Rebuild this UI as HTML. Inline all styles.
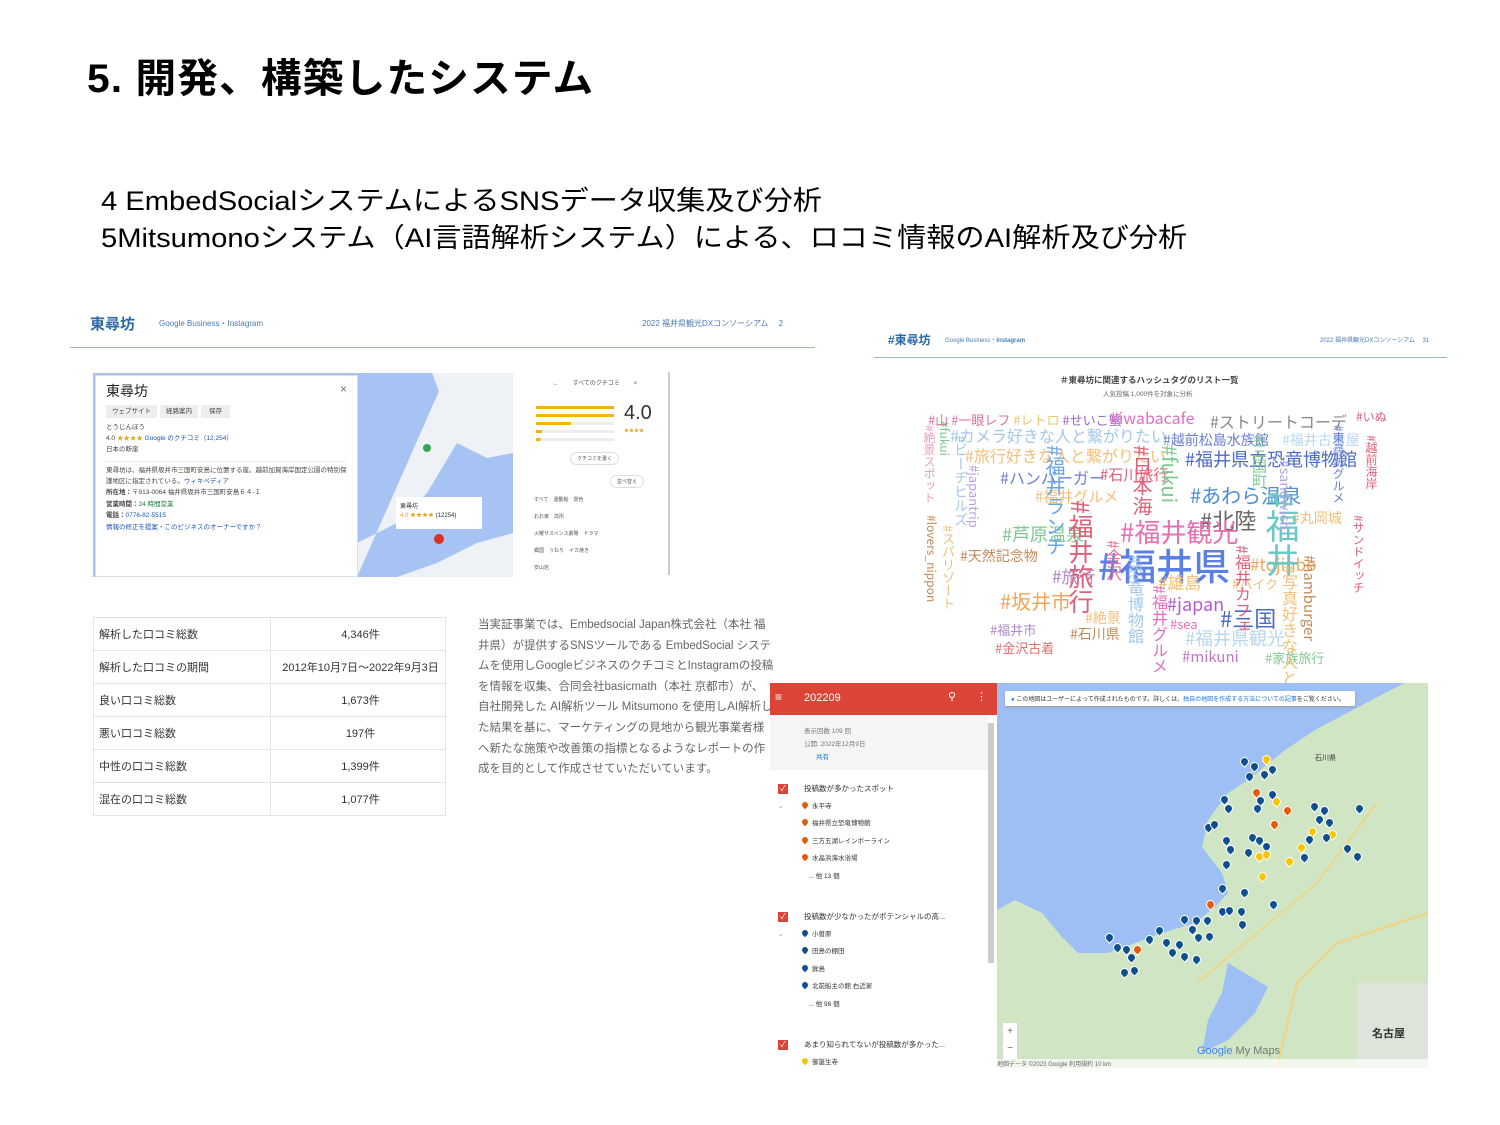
<!DOCTYPE html>
<html><head><meta charset="utf-8">
<style>
*{margin:0;padding:0;box-sizing:border-box}
body{width:1500px;height:1125px;background:#fff;position:relative;overflow:hidden;font-family:"Liberation Sans","Noto Sans CJK JP",sans-serif;color:#000}
.a{position:absolute;white-space:nowrap}
.n{white-space:normal}
.w{position:absolute;white-space:nowrap;font-family:"Noto Sans CJK JP",sans-serif;line-height:1}
.v{writing-mode:vertical-rl}
.pin{position:absolute;width:9px;height:9px;border-radius:50% 50% 50% 0;transform:rotate(-45deg);background:#0d4f8f;border:1px solid #fff}
.y{background:#f7c600}.o{background:#e8590c}
td{border:1px solid #e4e4e4;font-size:11px;color:#333;height:33px;padding-left:5px}
.cb{display:inline-block;width:10px;height:10px;background:#db4437;margin-right:16px;color:#fff;font-size:8px;line-height:10px;text-align:center;vertical-align:middle}
.p{display:inline-block;width:6px;height:6px;border-radius:50% 50% 50% 0;transform:rotate(-45deg);margin-right:4px}
</style></head><body>
<div class="a" style="left:87px;top:46px;font-size:40px;font-weight:bold;letter-spacing:1px;transform:scaleX(1.02);transform-origin:left">5. 開発、構築したシステム</div>
<div class="a" style="left:101px;top:179px;font-size:27px;transform:scaleX(1.08);transform-origin:left">4 EmbedSocialシステムによるSNSデータ収集及び分析</div>
<div class="a" style="left:101px;top:216px;font-size:27px;transform:scaleX(1.08);transform-origin:left">5Mitsumonoシステム（AI言語解析システム）による、ロコミ情報のAI解析及び分析</div>

<!-- left panel -->
<div class="a" style="left:90px;top:313px;font-size:15px;font-weight:bold;color:#2b6aa8">東尋坊</div>
<div class="a" style="left:159px;top:318px;font-size:8px;color:#4a7cb3">Google Business・Instagram</div>
<div class="a" style="left:642px;top:318px;font-size:8px;color:#4a7cb3">2022 福井県観光DXコンソーシアム　 2</div>
<div class="a" style="left:70px;top:347px;width:745px;height:1px;background:#9bb7d0"></div>

<div class="a" style="left:93px;top:373px;width:420px;height:204px;background:#a7c3f3"></div>
<svg class="a" style="left:357px;top:373px" width="156" height="204"><path d="M90 0L156 0 156 80 130 85 100 70 70 120 40 150 0 170 0 204 40 204 80 190 120 170 156 160 156 204 0 204" fill="#eef1f5"/><path d="M75 0 110 0 120 30 150 40 156 60 120 60 90 40Z" fill="#eef1f5"/><circle cx="82" cy="166" r="5" fill="#d93025"/><circle cx="70" cy="75" r="4" fill="#34a853"/></svg>
<div class="a n" style="left:396px;top:497px;width:86px;height:32px;background:#fff;font-size:6px;padding:4px;color:#333">東尋坊<br><span style="color:#e3a21a">4.0 ★★★★</span> (12254)</div>
<div class="a n" style="left:95px;top:375px;width:263px;height:202px;background:#fff;border:1px solid #ddd;padding:6px 10px;font-size:6.5px;color:#444;line-height:1.75">
<div style="font-size:14px;color:#222;margin-bottom:6px;line-height:1.3">東尋坊<span style="float:right;font-size:12px;color:#777">×</span></div>
<div style="margin-bottom:4px"><span style="background:#eee;padding:3px 6px;margin-right:3px">ウェブサイト</span><span style="background:#eee;padding:3px 6px;margin-right:3px">経路案内</span><span style="background:#eee;padding:3px 8px">保存</span></div>
とうじんぼう<br>4.0 <span style="color:#e3a21a">★★★★</span> <span style="color:#1a55b8">Google のクチコミ（12,254）</span><br>日本の断崖
<div style="border-top:1px solid #eee;margin:5px 0 3px"></div>
東尋坊は、福井県坂井市三国町安島に位置する崖。越前加賀海岸国定公園の特別保護地区に指定されている。<span style="color:#1a55b8">ウィキペディア</span><br><b>所在地：</b>〒913-0064 福井県坂井市三国町安島６４-１<br><b>営業時間：</b><span style="color:#188038">24 時間営業</span><br><b>電話：</b><span style="color:#1a55b8">0776-82-5515</span><br><span style="color:#1a55b8">情報の修正を提案・このビジネスのオーナーですか？</span></div>
<div class="a n" style="left:522px;top:372px;width:148px;height:203px;background:#fff;border-right:2px solid #ccc;font-size:5px;color:#555;padding:6px 10px">
<div style="text-align:center;font-size:6px">← 　　すべてのクチコミ　　 ×</div>
<div style="position:absolute;left:14px;top:34px;width:78px">
<div style="height:3px;background:#f4b400;margin-bottom:5px"></div><div style="height:3px;background:#f4b400;margin-bottom:5px"></div><div style="height:3px;background:linear-gradient(90deg,#f4b400 45%,#eee 45%);margin-bottom:5px"></div><div style="height:3px;background:linear-gradient(90deg,#f4b400 8%,#eee 8%);margin-bottom:5px"></div><div style="height:3px;background:linear-gradient(90deg,#f4b400 6%,#eee 6%)"></div></div>
<div style="position:absolute;left:102px;top:30px;font-size:20px;color:#333">4.0</div>
<div style="position:absolute;left:102px;top:55px;font-size:5px;color:#e3a21a">★★★★</div>
<div style="position:absolute;left:48px;top:80px;border:1px solid #ddd;border-radius:8px;padding:2px 6px">クチコミを書く</div>
<div style="position:absolute;left:88px;top:103px;border:1px solid #ddd;border-radius:8px;padding:2px 6px">並べ替え</div>
<div style="position:absolute;left:12px;top:120px;line-height:17px;width:130px">すべて　運動船　景色<br>おお東　高所<br>火曜サスペンス劇場　ドラマ<br>郷国　うねり　イカ焼き<br>安山岩</div></div>

<table class="a" style="left:93px;top:617px;border-collapse:collapse;width:353px">
<tr><td style="width:177px">解析した口コミ総数</td><td style="text-align:center">4,346件</td></tr>
<tr><td>解析した口コミの期間</td><td style="text-align:center">2012年10月7日～2022年9月3日</td></tr>
<tr><td>良い口コミ総数</td><td style="text-align:center">1,673件</td></tr>
<tr><td>悪い口コミ総数</td><td style="text-align:center">197件</td></tr>
<tr><td>中性の口コミ総数</td><td style="text-align:center">1,399件</td></tr>
<tr><td>混在の口コミ総数</td><td style="text-align:center">1,077件</td></tr></table>
<div class="a n" style="left:478px;top:615px;width:296px;font-size:11.5px;line-height:20.6px;color:#666;overflow:hidden;height:170px">当実証事業では、Embedsocial Japan株式会社（本社 福井県）が提供するSNSツールである EmbedSocial システムを使用しGoogleビジネスのクチコミとInstagramの投稿を情報を収集、合同会社basicmath（本社 京都市）が、自社開発した AI解析ツール Mitsumono を使用しAI解析した結果を基に、マーケティングの見地から観光事業者様へ新たな施策や改善策の指標となるようなレポートの作成を目的として作成させていただいています。</div>

<!-- right top panel -->
<div class="a" style="left:888px;top:331px;font-size:12px;font-weight:bold;color:#2b6aa8">#東尋坊</div>
<div class="a" style="left:945px;top:335px;font-size:6px;color:#4a7cb3">Google Business・<b>Instagram</b></div>
<div class="a" style="left:1320px;top:335px;font-size:6px;color:#4a7cb3">2022 福井県観光DXコンソーシアム　 31</div>
<div class="a" style="left:874px;top:357px;width:573px;height:1px;background:#9bb7d0"></div>
<div class="a" style="left:1060px;top:374px;font-size:8.5px;font-weight:bold;color:#444">＃東尋坊に関連するハッシュタグのリスト一覧</div>
<div class="a" style="left:1103px;top:388px;font-size:6.5px;color:#666">人気投稿 1,000件を対象に分析</div>
<div class="a" style="left:920px;top:405px;width:480px;height:280px;overflow:hidden">
<div class="w" style="left:8px;top:8px;font-size:13px;color:#e56f9a">#山 #一眼レフ <span style="color:#f2c46d">#レトロ</span> <span style="color:#9b6bc9">#せいこ蟹</span></div>
<div class="w" style="left:190px;top:4px;font-size:16px;color:#e06fc3">#iwabacafe</div>
<div class="w" style="left:290px;top:8px;font-size:16px;color:#888">#ストリートコーデ</div>
<div class="w" style="left:436px;top:6px;font-size:12px;color:#e0607a">#いぬ</div>
<div class="w" style="left:30px;top:22px;font-size:16px;color:#a4c8ea">#カメラ好きな人と繋がりたい</div>
<div class="w" style="left:45px;top:42px;font-size:16px;color:#f3bf78">#旅行好きな人と繋がりたい</div>
<div class="w" style="left:243px;top:28px;font-size:14px;color:#6a7fd6">#越前松島水族館</div>
<div class="w" style="left:362px;top:28px;font-size:14px;color:#b7d7f0">#福井古着屋</div>
<div class="w" style="left:265px;top:45px;font-size:18px;color:#4a6bc6">#福井県立恐竜博物館</div>
<div class="w" style="left:80px;top:64px;font-size:16px;color:#6a7fd6">#ハンバーガー</div>
<div class="w" style="left:180px;top:62px;font-size:15px;color:#e0607a">#石川旅行</div>
<div class="w" style="left:115px;top:84px;font-size:15px;color:#f3bf78">#福井グルメ</div>
<div class="w" style="left:270px;top:80px;font-size:20px;color:#4a8fd6">#あわら温泉</div>
<div class="w" style="left:280px;top:104px;font-size:22px;color:#666">#北陸</div>
<div class="w" style="left:372px;top:106px;font-size:14px;color:#f3bf78">#丸岡城</div>
<div class="w" style="left:200px;top:114px;font-size:26px;color:#e56fb0">#福井観光</div>
<div class="w" style="left:178px;top:141px;font-size:37px;color:#5a7fe6;font-weight:500">#福井県</div>
<div class="w" style="left:82px;top:120px;font-size:18px;color:#7fc98f">#芦原温泉</div>
<div class="w" style="left:40px;top:144px;font-size:14px;color:#c58a5a">#天然記念物</div>
<div class="w" style="left:80px;top:186px;font-size:20px;color:#f3a65a">#坂井市</div>
<div class="w" style="left:132px;top:162px;font-size:17px;color:#b087c9">#旅行</div>
<div class="w" style="left:238px;top:168px;font-size:17px;color:#f3bf78">#雄島</div>
<div class="w" style="left:312px;top:172px;font-size:13px;color:#f3bf78">#バイク</div>
<div class="w" style="left:247px;top:190px;font-size:18px;color:#b75ad6">#japan</div>
<div class="w" style="left:300px;top:202px;font-size:22px;color:#4a6bc6">#三国</div>
<div class="w" style="left:265px;top:224px;font-size:18px;color:#b7d7f0">#福井県観光</div>
<div class="w" style="left:262px;top:244px;font-size:15px;color:#c077c9">#mikuni</div>
<div class="w" style="left:345px;top:246px;font-size:13px;color:#7fc98f">#家族旅行</div>
<div class="w" style="left:75px;top:236px;font-size:13px;color:#e06f6f">#金沢古着</div>
<div class="w" style="left:150px;top:222px;font-size:14px;color:#c58a5a">#石川県</div>
<div class="w" style="left:165px;top:206px;font-size:14px;color:#f3bf78">#絶景</div>
<div class="w" style="left:250px;top:212px;font-size:13px;color:#e56fb0">#sea</div>
<div class="w" style="left:330px;top:150px;font-size:17px;color:#f3a65a">#tojinbo</div>
<div class="w" style="left:70px;top:218px;font-size:13px;color:#b087c9">#福井市</div>
<div class="w v" style="left:3px;top:20px;font-size:12px;color:#e7a0b8">#絶景スポット</div>
<div class="w v" style="left:18px;top:16px;font-size:12px;color:#7fc98f">#fukui</div>
<div class="w v" style="left:34px;top:30px;font-size:14px;color:#a4c8ea">#ビーチヒルズ</div>
<div class="w v" style="left:5px;top:110px;font-size:12px;color:#c58a5a">#lovers_nippon</div>
<div class="w v" style="left:22px;top:120px;font-size:13px;color:#f3bf78">#スパリゾート</div>
<div class="w v" style="left:48px;top:60px;font-size:13px;color:#b7a3e0">#japantrip</div>
<div class="w v" style="left:125px;top:40px;font-size:20px;color:#6aa6e6">#福井ランチ</div>
<div class="w v" style="left:148px;top:95px;font-size:25px;color:#e0607a">#福井旅行</div>
<div class="w v" style="left:212px;top:40px;font-size:20px;color:#e0607a">#日本海</div>
<div class="w v" style="left:240px;top:40px;font-size:20px;color:#7fc98f">#fukui</div>
<div class="w v" style="left:345px;top:85px;font-size:34px;color:#6ac9c4">#福井</div>
<div class="w v" style="left:332px;top:30px;font-size:15px;color:#7fc98f">#三国町</div>
<div class="w v" style="left:358px;top:55px;font-size:14px;color:#b7a3e0">#sandwich</div>
<div class="w v" style="left:382px;top:150px;font-size:15px;color:#c58a5a">#hamburger</div>
<div class="w v" style="left:412px;top:20px;font-size:12px;color:#6a7fd6">#東尋坊グルメ</div>
<div class="w v" style="left:186px;top:135px;font-size:16px;color:#e56f9a">#金沢</div>
<div class="w v" style="left:208px;top:150px;font-size:16px;color:#a4c8ea">#恐竜博物館</div>
<div class="w v" style="left:232px;top:180px;font-size:16px;color:#e06fc3">#福井グルメ</div>
<div class="w v" style="left:315px;top:140px;font-size:16px;color:#e0607a">#福井カフェ</div>
<div class="w v" style="left:362px;top:160px;font-size:16px;color:#f3bf78">#写真好きな人と</div>
<div class="w v" style="left:432px;top:110px;font-size:12px;color:#e0607a">#サンドイッチ</div>
<div class="w v" style="left:445px;top:30px;font-size:12px;color:#e0607a">#越前海岸</div>
</div>

<!-- My Maps -->
<div class="a" style="left:997px;top:683px;width:431px;height:385px;background:#9dbff3;overflow:hidden">
<svg width="431" height="385" style="position:absolute;left:0;top:0"><path d="M408 0 388 10 318 47 288 67 251 97 231 110 211 137 205 164 225 190 231 210 218 224 198 240 165 250 138 260 111 270 81 270 65 254 45 230 18 217 0 227 0 385 431 385 431 0Z" fill="#cfe5c4"/><path d="M231 280 271 304 258 330 231 357 205 370 211 337 225 310Z" fill="#9dbff3"/><path d="M280 385 300 300 340 260 431 230" stroke="#f5d27a" stroke-width="2" fill="none"/><path d="M200 300 260 250 320 200 380 120" stroke="#f5d27a" stroke-width="1.5" fill="none"/><rect x="360" y="300" width="71" height="85" fill="#e4e4e4" opacity=".7"/></svg>
<div class="n" style="position:absolute;left:8px;top:8px;width:350px;height:15px;background:#fff;font-size:6px;color:#333;padding:3px 6px;box-shadow:0 1px 2px #999;white-space:nowrap"><span style="color:#1a73e8">●</span> この地図はユーザーによって作成されたものです。詳しくは、<span style="color:#1a73e8">独自の地図を作成する方法についての記事</span>をご覧ください。</div>
<div style="position:absolute;left:6px;top:340px;width:14px;height:36px;background:#fff;font-size:10px;color:#666;text-align:center;line-height:17px">+<br>−</div>
<div style="position:absolute;left:200px;top:362px;font-size:11px;color:#4285f4">Google <span style="color:#777">My Maps</span></div>
<div style="position:absolute;left:375px;top:342px;font-size:11px;font-weight:bold;color:#333">名古屋</div>
<div style="position:absolute;left:318px;top:70px;font-size:7px;color:#333">石川県</div>
<div style="position:absolute;left:0;top:376px;width:431px;height:9px;background:rgba(255,255,255,.7);font-size:6px;color:#666">地図データ ©2023 Google 利用規約 10 km</div>
</div>
<div class="pin" style="left:1240px;top:757px"></div><div class="pin" style="left:1250px;top:762px"></div><div class="pin" style="left:1260px;top:770px"></div><div class="pin y" style="left:1262px;top:755px"></div><div class="pin" style="left:1268px;top:765px"></div><div class="pin" style="left:1245px;top:772px"></div><div class="pin o" style="left:1252px;top:788px"></div><div class="pin" style="left:1268px;top:790px"></div><div class="pin" style="left:1256px;top:796px"></div><div class="pin y" style="left:1272px;top:797px"></div><div class="pin" style="left:1220px;top:795px"></div><div class="pin" style="left:1224px;top:804px"></div><div class="pin o" style="left:1283px;top:806px"></div><div class="pin" style="left:1253px;top:804px"></div><div class="pin" style="left:1204px;top:823px"></div><div class="pin" style="left:1210px;top:820px"></div><div class="pin o" style="left:1270px;top:820px"></div><div class="pin" style="left:1222px;top:836px"></div><div class="pin" style="left:1226px;top:845px"></div><div class="pin" style="left:1248px;top:833px"></div><div class="pin" style="left:1255px;top:836px"></div><div class="pin" style="left:1262px;top:842px"></div><div class="pin y" style="left:1255px;top:852px"></div><div class="pin y" style="left:1262px;top:850px"></div><div class="pin" style="left:1244px;top:848px"></div><div class="pin y" style="left:1258px;top:872px"></div><div class="pin" style="left:1222px;top:860px"></div><div class="pin" style="left:1310px;top:802px"></div><div class="pin" style="left:1320px;top:806px"></div><div class="pin" style="left:1315px;top:815px"></div><div class="pin" style="left:1325px;top:818px"></div><div class="pin y" style="left:1308px;top:827px"></div><div class="pin y" style="left:1328px;top:830px"></div><div class="pin" style="left:1305px;top:835px"></div><div class="pin" style="left:1322px;top:833px"></div><div class="pin y" style="left:1297px;top:843px"></div><div class="pin" style="left:1300px;top:853px"></div><div class="pin y" style="left:1285px;top:857px"></div><div class="pin" style="left:1355px;top:804px"></div><div class="pin" style="left:1343px;top:844px"></div><div class="pin" style="left:1353px;top:852px"></div><div class="pin" style="left:1218px;top:884px"></div><div class="pin" style="left:1240px;top:888px"></div><div class="pin o" style="left:1206px;top:900px"></div><div class="pin" style="left:1218px;top:907px"></div><div class="pin" style="left:1225px;top:906px"></div><div class="pin" style="left:1237px;top:907px"></div><div class="pin" style="left:1238px;top:920px"></div><div class="pin" style="left:1269px;top:900px"></div><div class="pin" style="left:1180px;top:915px"></div><div class="pin" style="left:1192px;top:916px"></div><div class="pin" style="left:1203px;top:916px"></div><div class="pin" style="left:1188px;top:925px"></div><div class="pin" style="left:1194px;top:933px"></div><div class="pin" style="left:1205px;top:932px"></div><div class="pin" style="left:1155px;top:926px"></div><div class="pin" style="left:1145px;top:935px"></div><div class="pin" style="left:1162px;top:938px"></div><div class="pin" style="left:1175px;top:940px"></div><div class="pin" style="left:1168px;top:948px"></div><div class="pin" style="left:1180px;top:952px"></div><div class="pin" style="left:1192px;top:955px"></div><div class="pin" style="left:1105px;top:933px"></div><div class="pin" style="left:1113px;top:943px"></div><div class="pin" style="left:1122px;top:945px"></div><div class="pin o" style="left:1133px;top:945px"></div><div class="pin" style="left:1127px;top:953px"></div><div class="pin" style="left:1120px;top:968px"></div><div class="pin" style="left:1130px;top:966px"></div>

<!-- sidebar -->
<div class="a" style="left:770px;top:683px;width:227px;height:385px;background:#fff;overflow:hidden;font-size:7.5px;color:#333">
<div style="height:32px;background:#db4437;color:#fff;font-size:11px;padding:9px 0 0 34px;position:relative"><span style="position:absolute;left:5px;top:7px;font-size:12px">≡</span>202209<span style="position:absolute;left:178px;top:7px">⚲</span><span style="position:absolute;left:206px;top:7px">⋮</span></div>
<div style="background:#f5f5f5;height:55px;padding:10px 0 0 34px;font-size:6.5px;color:#777;line-height:13px;width:218px">表示回数 109 回<br>公開: 2022年12月9日<br><span style="color:#1a73e8;padding-left:12px">共有</span></div>
<div style="position:absolute;left:218px;top:40px;width:6px;height:240px;background:#ccc"></div>
<div style="position:absolute;left:8px;top:97px;line-height:17.5px">
<div><span class="cb">✓</span>投稿数が多かったスポット</div>
<div style="padding-left:24px;font-size:6.5px;position:relative"><span style="position:absolute;left:0;top:0;color:#888">⌄</span><span class="p o"></span>永平寺<br><span class="p o"></span>福井県立恐竜博物館<br><span class="p o"></span>三方五湖レインボーライン<br><span class="p o"></span>水晶浜海水浴場<br>　... 他 13 個</div>
<div style="margin-top:23px"><span class="cb">✓</span>投稿数が少なかったがポテンシャルの高...</div>
<div style="padding-left:24px;font-size:6.5px;position:relative"><span style="position:absolute;left:0;top:0;color:#888">⌄</span><span class="p" style="background:#0d4f8f"></span>小曽原<br><span class="p" style="background:#0d4f8f"></span>田島の棚田<br><span class="p" style="background:#0d4f8f"></span>鉾島<br><span class="p" style="background:#0d4f8f"></span>北前船主の館 右近家<br>　... 他 98 個</div>
<div style="margin-top:23px"><span class="cb">✓</span>あまり知られてないが投稿数が多かった...</div>
<div style="padding-left:24px;font-size:6.5px"><span class="p y"></span>御誕生寺</div>
</div></div>
</body></html>
